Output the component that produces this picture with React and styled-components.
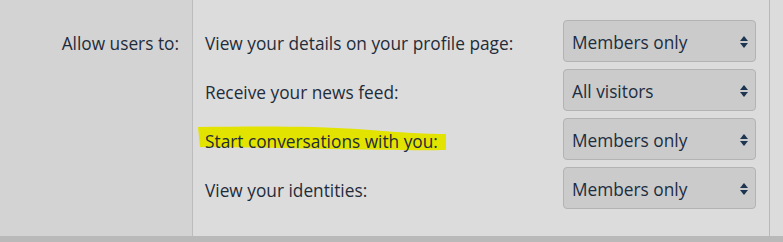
import React from "react";
import styled, { createGlobalStyle } from "styled-components";

const GlobalStyle = createGlobalStyle`
  html, body {
    margin: 0;
    padding: 0;
    background: #dcdcdc;
  }
  body {
    font-family: "Open Sans", "Noto Sans", sans-serif;
    color: #1f2c3a;
  }
`;

const Page = styled.div`
  width: 783px;
  height: 242px;
  display: flex;
  flex-direction: column;
  overflow: hidden;
`;

const Panel = styled.div`
  flex: 1;
  display: flex;
`;

const LabelCol = styled.div`
  width: 179px;
  padding: 32px 13px 0 0;
  background: #d3d3d3;
  border-right: 1px solid #bcbcbc;
  text-align: right;
  font-size: 17.3px;
  line-height: 24px;
`;

const Fields = styled.div`
  width: 551px;
  padding: 20px 13px 0 12px;
  border-right: 1px solid #b9b9b9;
  display: flex;
  flex-direction: column;
  gap: 7px;
`;

const Row = styled.div`
  height: 42px;
  display: grid;
  grid-template-columns: 1fr 193px;
  align-items: center;
`;

const Label = styled.span`
  position: relative;
  font-size: 17.3px;
  line-height: 24px;
  padding-top: 6px;
`;

const Text = styled.span`
  position: relative;
`;

const Marker = styled.svg`
  position: absolute;
  left: -8px;
  top: 2px;
  width: 250px;
  height: 26px;
`;

const Select = styled.div`
  height: 42px;
  box-sizing: border-box;
  border: 1px solid #b3b3b3;
  border-radius: 4px;
  background: #cbcbcb;
  display: flex;
  align-items: center;
  justify-content: space-between;
  padding: 2px 7px 0 8px;
  font-size: 17.3px;
  color: #1c2d40;
`;

const BottomBar = styled.div`
  height: 6px;
  background: #b9b9b9;
`;

const Arrows = () => (
  <svg width="8" height="12" viewBox="0 0 8 12">
    <path d="M0 5 L4 0 L8 5 Z" fill="#1d3550" />
    <path d="M0 7 L4 12 L8 7 Z" fill="#1d3550" />
  </svg>
);

const rows = [
  { label: "View your details on your profile page:", value: "Members only" },
  { label: "Receive your news feed:", value: "All visitors" },
  { label: "Start conversations with you:", value: "Members only", marked: true },
  { label: "View your identities:", value: "Members only" },
];

export default function App() {
  return (
    <Page>
      <GlobalStyle />
      <Panel>
        <LabelCol>Allow users to:</LabelCol>
        <Fields>
          {rows.map(row => (
            <Row key={row.label}>
              <Label>
                {row.marked && (
                  <Marker viewBox="0 0 250 26">
                    <path
                      d="M1 1 C60 0 120 0 160 3 C195 6 230 8 249 8 L249 24 C200 25 120 22 3 21 Z"
                      fill="#e3e300"
                    />
                  </Marker>
                )}
                <Text>{row.label}</Text>
              </Label>
              <Select>
                <span>{row.value}</span>
                <Arrows />
              </Select>
            </Row>
          ))}
        </Fields>
      </Panel>
      <BottomBar />
    </Page>
  );
}
